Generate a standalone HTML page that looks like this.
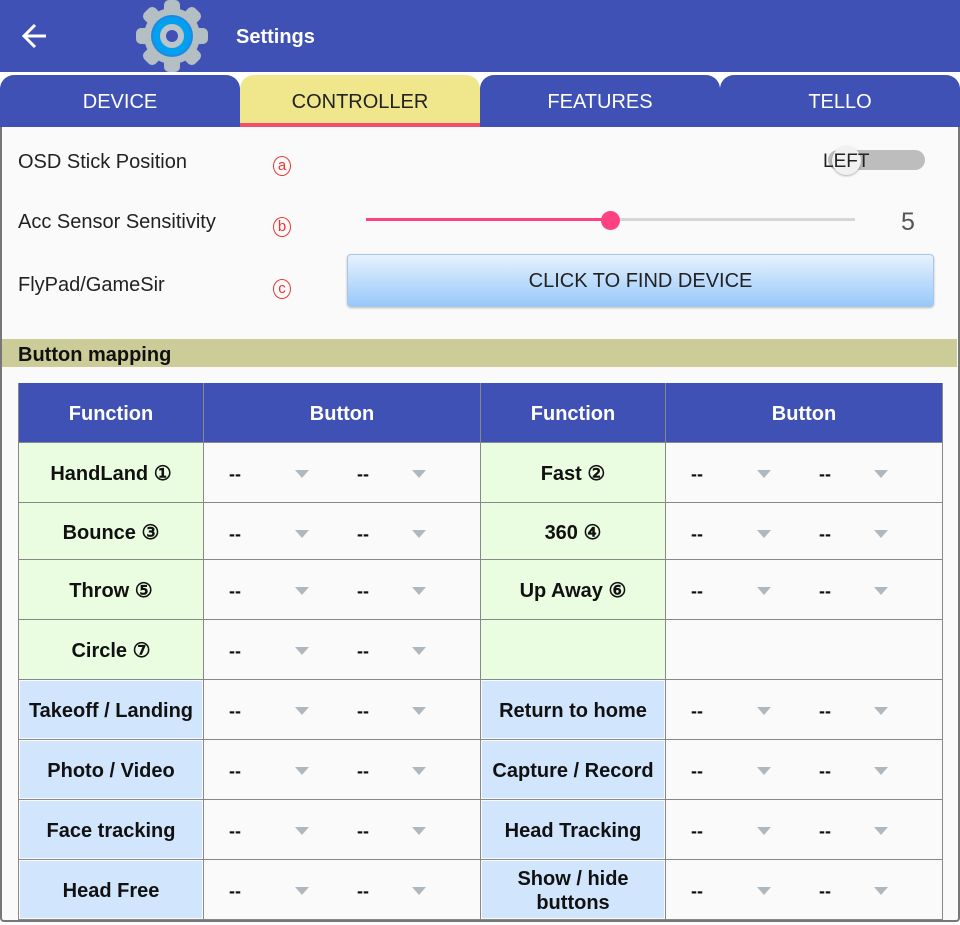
<!DOCTYPE html>
<html><head><meta charset="utf-8"><style>
*{margin:0;padding:0;box-sizing:border-box}
body{width:960px;height:925px;background:#fff;font-family:"Liberation Sans",sans-serif;position:relative;overflow:hidden}
.a{position:absolute}
.top{left:0;top:0;width:960px;height:72px;background:#3F51B5}
.tab{top:75px;height:52px;width:240px;background:#3F51B5;border-radius:14px 14px 0 0;color:#fff;font-size:20px;text-align:center;line-height:55px}
.panel{left:0;top:127px;width:960px;height:795px;background:#fafafa;border:2px solid #777;border-top:none;border-radius:0 0 4px 4px}
.lab{left:18px;font-size:20px;color:#222}
.mk{left:273px;width:18px;height:20px;border:1px solid #e33;border-radius:50%;color:#e33;font-size:15px;line-height:17px;text-align:center}
table{position:absolute;left:18px;top:383px;width:924px;border-collapse:collapse;table-layout:fixed}
td{border:1px solid #888;height:60px;font-size:20px;font-weight:bold;text-align:center;position:relative;color:#111;line-height:24px;padding-top:4px}
tr.s td{height:57px}
th{background:#3F51B5;color:#fff;font-size:20px;height:59px;border:1px solid #888;border-top:none;padding-top:4px}
.g{background:#eafde0}
.b{background:#d1e6fd;box-shadow:inset 0 0 0 1px #fafafa}
.d{background:#fafafa}
.d span{position:absolute;top:19px;font-weight:bold;font-size:18px}
.d i{position:absolute;top:27px;width:0;height:0;border-left:7px solid transparent;border-right:7px solid transparent;border-top:8px solid #b0b8bf}
</style></head><body>
<div class="a top"></div>
<svg class="a" style="left:20px;top:22px" width="30" height="28" viewBox="0 0 30 28"><path d="M26 14H5M15 3 4 14l11 11" stroke="#fff" stroke-width="3" fill="none"/></svg>
<svg class="a" style="left:134px;top:0" width="76" height="72" viewBox="-38 -36 76 72">
<g fill="#b4bfc3"><circle r="28"/>
<rect x="-8" y="-36" width="16" height="72" rx="5"/>
<rect x="-8" y="-36" width="16" height="72" rx="5" transform="rotate(45)"/>
<rect x="-8" y="-36" width="16" height="72" rx="5" transform="rotate(90)"/>
<rect x="-8" y="-36" width="16" height="72" rx="5" transform="rotate(135)"/></g>
<circle r="21" fill="#1e88e5"/><circle r="19" fill="#03a0f0"/><circle r="12" fill="#bcc5c9"/><circle r="6" fill="#3F51B5"/></svg>
<div class="a" style="left:236px;top:26px;color:#fff;font-size:20px;font-weight:bold">Settings</div>
<div class="a tab" style="left:0">DEVICE</div>
<div class="a tab" style="left:240px;background:#f0e68c;color:#222;border-bottom:4px solid #ef4f6f">CONTROLLER</div>
<div class="a tab" style="left:480px">FEATURES</div>
<div class="a tab" style="left:720px">TELLO</div>
<div class="a panel"></div>
<div class="a lab" style="top:151px">OSD Stick Position</div>
<div class="a lab" style="top:211px">Acc Sensor Sensitivity</div>
<div class="a lab" style="top:274px">FlyPad/GameSir</div>
<div class="a mk" style="top:156px">a</div>
<div class="a mk" style="top:217px">b</div>
<div class="a mk" style="top:279px">c</div>
<div class="a mk" style="top:340px">d</div>
<div class="a" style="left:828px;top:150px;width:97px;height:20px;border-radius:10px;background:#bdbdbd"></div>
<div class="a" style="left:832px;top:146px;width:29px;height:29px;border-radius:50%;background:#f1f1f1;box-shadow:0 1px 2px rgba(0,0,0,.3)"></div>
<div class="a" style="left:823px;top:151px;font-size:19px;color:#222">LEFT</div>
<div class="a" style="left:366px;top:218px;width:245px;height:3px;background:#ff4081"></div>
<div class="a" style="left:611px;top:218px;width:244px;height:3px;background:#d6d6d6"></div>
<div class="a" style="left:601px;top:211px;width:19px;height:19px;border-radius:50%;background:#ff4081"></div>
<div class="a" style="left:901px;top:208px;font-size:25px;color:#555">5</div>
<div class="a" style="left:347px;top:254px;width:587px;height:53px;border-radius:4px;background:linear-gradient(#e6f2fe,#98c8fa);border:1px solid #a9c6e6;box-shadow:0 1px 2px rgba(0,0,0,.25);text-align:center;line-height:53px;font-size:20px;color:#222">CLICK TO FIND DEVICE</div>
<div class="a" style="left:2px;top:339px;width:955px;height:28px;background:#cccc99"></div>
<div class="a" style="left:18px;top:344px;font-size:20px;font-weight:bold;color:#111">Button mapping</div>
<table>
<colgroup><col style="width:185px"><col style="width:277px"><col style="width:185px"><col style="width:277px"></colgroup>
<tr><th>Function</th><th>Button</th><th>Function</th><th>Button</th></tr>
<tr><td class="g">HandLand ①</td><td class="d"><span style="left:25px">--</span><i style="left:91px"></i><span style="left:153px">--</span><i style="left:208px"></i></td><td class="g">Fast ②</td><td class="d"><span style="left:25px">--</span><i style="left:91px"></i><span style="left:153px">--</span><i style="left:208px"></i></td></tr>
<tr class="s"><td class="g">Bounce ③</td><td class="d"><span style="left:25px">--</span><i style="left:91px"></i><span style="left:153px">--</span><i style="left:208px"></i></td><td class="g">360 ④</td><td class="d"><span style="left:25px">--</span><i style="left:91px"></i><span style="left:153px">--</span><i style="left:208px"></i></td></tr>
<tr><td class="g">Throw ⑤</td><td class="d"><span style="left:25px">--</span><i style="left:91px"></i><span style="left:153px">--</span><i style="left:208px"></i></td><td class="g">Up Away ⑥</td><td class="d"><span style="left:25px">--</span><i style="left:91px"></i><span style="left:153px">--</span><i style="left:208px"></i></td></tr>
<tr><td class="g">Circle ⑦</td><td class="d"><span style="left:25px">--</span><i style="left:91px"></i><span style="left:153px">--</span><i style="left:208px"></i></td><td class="g"></td><td class="d"></td></tr>
<tr><td class="b">Takeoff / Landing</td><td class="d"><span style="left:25px">--</span><i style="left:91px"></i><span style="left:153px">--</span><i style="left:208px"></i></td><td class="b">Return to home</td><td class="d"><span style="left:25px">--</span><i style="left:91px"></i><span style="left:153px">--</span><i style="left:208px"></i></td></tr>
<tr><td class="b">Photo / Video</td><td class="d"><span style="left:25px">--</span><i style="left:91px"></i><span style="left:153px">--</span><i style="left:208px"></i></td><td class="b">Capture / Record</td><td class="d"><span style="left:25px">--</span><i style="left:91px"></i><span style="left:153px">--</span><i style="left:208px"></i></td></tr>
<tr><td class="b">Face tracking</td><td class="d"><span style="left:25px">--</span><i style="left:91px"></i><span style="left:153px">--</span><i style="left:208px"></i></td><td class="b">Head Tracking</td><td class="d"><span style="left:25px">--</span><i style="left:91px"></i><span style="left:153px">--</span><i style="left:208px"></i></td></tr>
<tr><td class="b">Head Free</td><td class="d"><span style="left:25px">--</span><i style="left:91px"></i><span style="left:153px">--</span><i style="left:208px"></i></td><td class="b">Show / hide<br>buttons</td><td class="d"><span style="left:25px">--</span><i style="left:91px"></i><span style="left:153px">--</span><i style="left:208px"></i></td></tr>
</table>
</body></html>
